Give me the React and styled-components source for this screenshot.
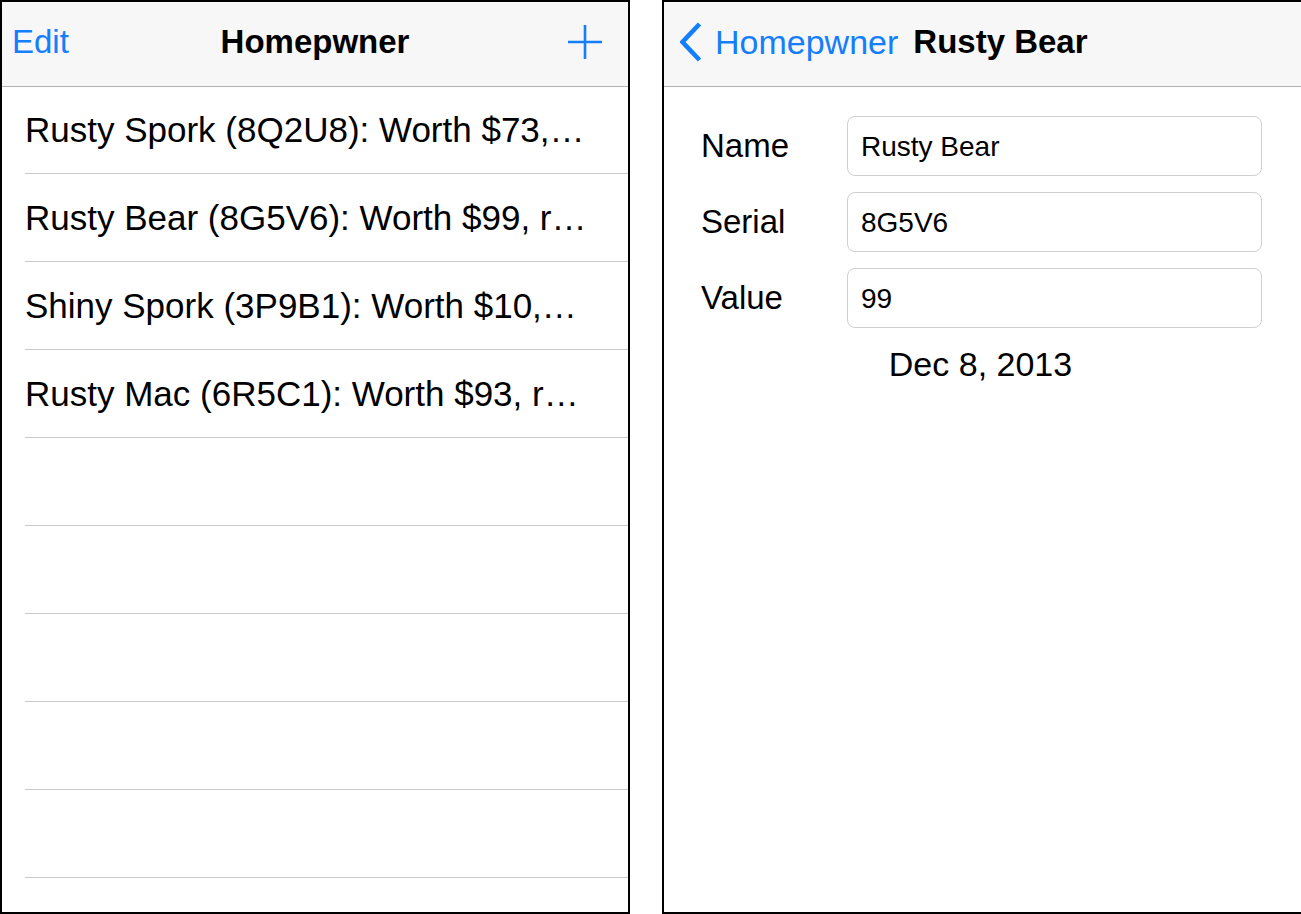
import React from "react";
import styled, { createGlobalStyle } from "styled-components";

const blue = "#157efb";

const GlobalStyle = createGlobalStyle`
  html, body {
    margin: 0;
    padding: 0;
    background: #fff;
    font-family: "Liberation Sans", Arial, Helvetica, sans-serif;
    color: #000;
  }
`;

const Page = styled.div`
  display: flex;
  gap: 32px;
  width: 1301px;
  height: 914px;
  overflow: hidden;
`;

const Screen = styled.div`
  box-sizing: border-box;
  width: ${p => (p.wide ? "639px" : "630px")};
  height: 914px;
  border: 2px solid #000;
  border-right: ${p => (p.wide ? "none" : "2px solid #000")};
  display: flex;
  flex-direction: column;
  background: #fff;
`;

const NavBar = styled.div`
  box-sizing: border-box;
  height: 85px;
  flex-shrink: 0;
  background: #f7f7f7;
  border-bottom: 1px solid #b2b2b2;
  display: grid;
  grid-template-columns: 1fr auto 1fr;
  align-items: center;
  padding: 0 10px 4px 10px;
`;

const DetailNavBar = styled(NavBar)`
  display: flex;
  gap: 15px;
  padding: 0 16px 4px 16px;
`;

const NavButton = styled.span`
  font-size: 33px;
  color: ${blue};
  justify-self: ${p => (p.end ? "end" : "start")};
  margin-right: ${p => (p.end ? "15px" : "0")};
  display: flex;
  align-items: center;
`;

const BackButton = styled.span`
  display: flex;
  align-items: center;
  gap: 13px;
  font-size: 34px;
  color: ${blue};
`;

const NavTitle = styled.span`
  font-size: 33px;
  font-weight: bold;
`;

const List = styled.div`
  display: flex;
  flex-direction: column;
`;

const Row = styled.div`
  box-sizing: border-box;
  height: 88px;
  margin-left: 23px;
  padding-right: 30px;
  border-bottom: 1px solid #c8c7cc;
  display: flex;
  align-items: center;
  &:first-child {
    height: 87px;
  }
`;

const RowText = styled.span`
  font-size: 35px;
  white-space: nowrap;
`;

const Form = styled.div`
  display: flex;
  flex-direction: column;
  gap: 16px;
  padding: 29px 39px 0 37px;
`;

const Field = styled.div`
  display: grid;
  grid-template-columns: 146px 1fr;
  align-items: center;
`;

const Label = styled.span`
  font-size: 33px;
`;

const Input = styled.input`
  box-sizing: border-box;
  height: 60px;
  width: 100%;
  border: 1px solid #cfcfcf;
  border-radius: 8px;
  padding: 2px 13px 0;
  font-family: inherit;
  font-size: 28px;
  color: #000;
  background: #fff;
  outline: none;
`;

const DateText = styled.div`
  text-align: center;
  font-size: 34px;
  margin-top: 17px;
  padding-right: 4px;
`;

const items = [
  "Rusty Spork (8Q2U8): Worth $73,…",
  "Rusty Bear (8G5V6): Worth $99, r…",
  "Shiny Spork (3P9B1): Worth $10,…",
  "Rusty Mac (6R5C1): Worth $93, r…",
  "",
  "",
  "",
  "",
  ""
];

const PlusIcon = () => (
  <svg width="36" height="36" viewBox="0 0 36 36">
    <path d="M18 1v34M1 18h34" stroke={blue} strokeWidth="2.6" fill="none" />
  </svg>
);

const ChevronIcon = () => (
  <svg width="22" height="40" viewBox="0 0 22 40">
    <path
      d="M19.5 2L2.5 20l17 18"
      stroke={blue}
      strokeWidth="4.6"
      fill="none"
      strokeLinejoin="miter"
    />
  </svg>
);

export default function App() {
  return (
    <Page>
      <GlobalStyle />
      <Screen>
        <NavBar>
          <NavButton>Edit</NavButton>
          <NavTitle>Homepwner</NavTitle>
          <NavButton end>
            <PlusIcon />
          </NavButton>
        </NavBar>
        <List>
          {items.map((item, index) => (
            <Row key={index}>
              <RowText>{item}</RowText>
            </Row>
          ))}
        </List>
      </Screen>
      <Screen wide>
        <DetailNavBar>
          <BackButton>
            <ChevronIcon />
            Homepwner
          </BackButton>
          <NavTitle>Rusty Bear</NavTitle>
        </DetailNavBar>
        <Form>
          <Field>
            <Label>Name</Label>
            <Input defaultValue="Rusty Bear" />
          </Field>
          <Field>
            <Label>Serial</Label>
            <Input defaultValue="8G5V6" />
          </Field>
          <Field>
            <Label>Value</Label>
            <Input defaultValue="99" />
          </Field>
        </Form>
        <DateText>Dec 8, 2013</DateText>
      </Screen>
    </Page>
  );
}
